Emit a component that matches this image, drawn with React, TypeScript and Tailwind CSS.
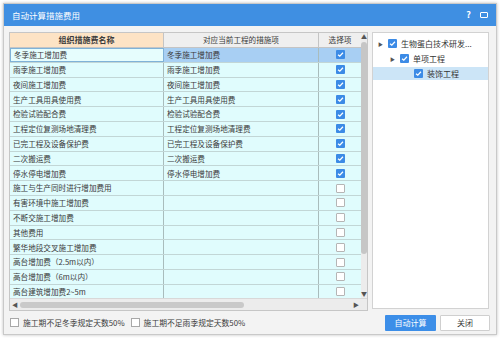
import React from "react";

const rows: [string, string, boolean][] = [
  ["冬季施工增加费", "冬季施工增加费", true],
  ["雨季施工增加费", "雨季施工增加费", true],
  ["夜间施工增加费", "夜间施工增加费", true],
  ["生产工具用具使用费", "生产工具用具使用费", true],
  ["检验试验配合费", "检验试验配合费", true],
  ["工程定位复测场地清理费", "工程定位复测场地清理费", true],
  ["已完工程及设备保护费", "已完工程及设备保护费", true],
  ["二次搬运费", "二次搬运费", true],
  ["停水停电增加费", "停水停电增加费", true],
  ["施工与生产同时进行增加费用", "", false],
  ["有害环境中施工增加费", "", false],
  ["不断交施工增加费", "", false],
  ["其他费用", "", false],
  ["繁华地段交叉施工增加费", "", false],
  ["高台增加费（2.5m以内）", "", false],
  ["高台增加费（6m以内）", "", false],
  ["高台建筑增加费2~5m", "", false],
];

function Check({ on }: { on: boolean }) {
  if (!on) {
    return <div className="w-[9px] h-[9px] bg-white border border-[#b5b5b5] rounded-[1px]" />;
  }
  return (
    <div className="w-[9px] h-[9px] bg-[#3c8be6] rounded-[1px] flex items-center justify-center">
      <svg width="7" height="7" viewBox="0 0 8 8">
        <path d="M1.2 4.2 L3.2 6 L6.8 2" fill="none" stroke="white" strokeWidth="1.4" />
      </svg>
    </div>
  );
}

export default function App() {
  const font = { fontFamily: '"Noto Sans CJK SC", "Noto Sans", sans-serif' };

  return (
    <div className="w-[500px] h-[339px] bg-white overflow-hidden pt-[3px] pl-[3px]" style={font}>
      <div className="w-[494px] h-[332px] flex flex-col bg-[#f3f3f3] border border-[#c9c9c9] shadow-[0_0_3px_rgba(0,0,0,0.25)]">
        {/* Title bar */}
        <div className="h-[22px] bg-[#3f8fe2] flex items-center px-[8px] text-white">
          <span className="text-[8.5px] flex-1">自动计算措施费用</span>
          <span className="text-[9px] font-bold mr-[9px]">?</span>
          <div className="w-[8px] h-[6px] border-[1.5px] border-white rounded-[1px]" />
        </div>

        {/* Body */}
        <div className="flex gap-[4px] pl-[5px] pt-[6px]">
          {/* Table area */}
          <div className="w-[359px] h-[279px] flex flex-col border border-[#c6c6c6] bg-[#f0f0f0]">
            <div className="flex h-[266px] overflow-hidden">
              <div className="w-[351px] flex flex-col text-[7.6px] text-[#3a3a3a]">
                <div className="flex h-[15px] shrink-0 border-b border-[#c4c4c4]">
                  <div className="w-[154px] bg-[#fde3c5] flex items-center justify-center font-bold text-[8px] border-r border-[#c4c4c4]">
                    组织措施费名称
                  </div>
                  <div className="w-[155px] bg-[#efefef] flex items-center justify-center border-r border-[#c4c4c4]">
                    对应当前工程的措施项
                  </div>
                  <div className="w-[42px] bg-[#efefef] flex items-center justify-center">选择项</div>
                </div>
                {rows.map(([a, b, on], i) => (
                  <div key={i} className="flex h-[14.8px] shrink-0 border-b border-[#c2d6d6] bg-[#e0fcfd]">
                    <div
                      className={
                        i === 0
                          ? "w-[154px] flex items-center pl-[3px] border border-[#7fb2d8] bg-[#e6fdfd]"
                          : "w-[154px] flex items-center pl-[3px] border-r border-[#a9bcbc]"
                      }
                    >
                      {a}
                    </div>
                    <div
                      className={
                        i === 0
                          ? "w-[155px] flex items-center pl-[3px] border-r border-[#a9bcbc] bg-[#a8cff3]"
                          : "w-[155px] flex items-center pl-[3px] border-r border-[#a9bcbc]"
                      }
                    >
                      {b}
                    </div>
                    <div className={i === 0 ? "w-[42px] flex items-center justify-center bg-[#a8cff3]" : "w-[42px] flex items-center justify-center"}>
                      <Check on={on} />
                    </div>
                  </div>
                ))}
              </div>
              {/* Vertical scrollbar */}
              <div className="w-[8px] bg-[#ececec] flex flex-col items-center">
                <span className="text-[6px] leading-[8px] text-[#555]">▲</span>
                <div className="w-[6px] h-[212px] bg-[#c6c6c6] rounded-[3px] mt-[1px]" />
                <div className="flex-1" />
                <span className="text-[6px] leading-[8px] text-[#555]">▼</span>
              </div>
            </div>
            {/* Horizontal scrollbar */}
            <div className="h-[12px] flex items-center px-[2px] bg-[#ececec] border-t border-[#d8d8d8]">
              <span className="text-[6px] text-[#555]">◀</span>
              <div className="w-[224px] h-[6px] bg-[#c9c9c9] rounded-[3px] ml-[2px]" />
              <div className="flex-1" />
              <span className="text-[6px] text-[#555] mr-[6px]">▶</span>
            </div>
          </div>

          {/* Tree */}
          <div className="w-[117px] h-[277px] bg-white border border-[#d2d2d2] text-[8px] text-[#333] pt-[3px]">
            <div className="flex items-center h-[15px] pl-[5px] gap-[3px]">
              <span className="text-[5px] text-[#555] w-[7px]">▶</span>
              <Check on />
              <span className="ml-[1px] whitespace-nowrap">生物蛋白技术研发...</span>
            </div>
            <div className="flex items-center h-[15px] pl-[17px] gap-[3px]">
              <span className="text-[5px] text-[#555] w-[7px]">▶</span>
              <Check on />
              <span className="ml-[1px]">单项工程</span>
            </div>
            <div className="flex items-center h-[13px] pl-[41px] gap-[3px] bg-[#cce5f7] mt-[1px]">
              <Check on />
              <span className="ml-[1px]">装饰工程</span>
            </div>
          </div>
        </div>

        {/* Footer */}
        <div className="flex items-center flex-1 pl-[6px] pr-[6px] text-[7.8px] text-[#3a3a3a]">
          <div className="w-[9px] h-[9px] bg-white border border-[#a8a8a8]" />
          <span className="ml-[4px]">施工期不足冬季规定天数50%</span>
          <div className="w-[9px] h-[9px] bg-white border border-[#a8a8a8] ml-[6px]" />
          <span className="ml-[4px]">施工期不足雨季规定天数50%</span>
          <div className="flex-1" />
          <button className="w-[51px] h-[16px] bg-[#3c8ee8] text-white text-[8px] rounded-[1px]">自动计算</button>
          <button className="w-[50px] h-[16px] bg-white border border-[#cfcfcf] text-[8px] ml-[4px] rounded-[1px]">关闭</button>
        </div>
      </div>
    </div>
  );
}
